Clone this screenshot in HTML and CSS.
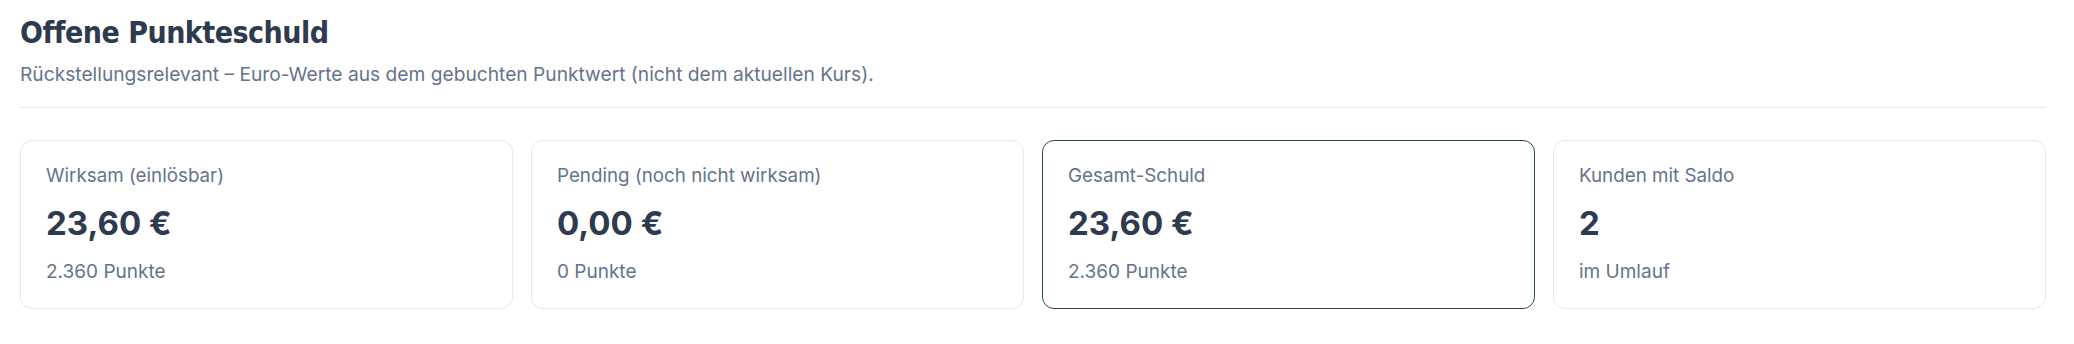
FILE: index.html
```html
<!DOCTYPE html>
<html lang="de">
<head>
<meta charset="utf-8">
<title>Offene Punkteschuld</title>
<link rel="stylesheet" href="styles.css">
</head>
<body>
<section class="page">
  <header class="head">
    <h1 class="title">Offene Punkteschuld</h1>
    <p class="subtitle">Rückstellungsrelevant – Euro-Werte aus dem gebuchten Punktwert (nicht dem aktuellen Kurs).</p>
  </header>
  <hr class="divider">
  <div class="cards">
    <div class="card">
      <div class="card-label">Wirksam (einlösbar)</div>
      <div class="card-value">23,60 €</div>
      <div class="card-sub">2.360 Punkte</div>
    </div>
    <div class="card">
      <div class="card-label">Pending (noch nicht wirksam)</div>
      <div class="card-value">0,00 €</div>
      <div class="card-sub">0 Punkte</div>
    </div>
    <div class="card card-highlight">
      <div class="card-label">Gesamt-Schuld</div>
      <div class="card-value">23,60 €</div>
      <div class="card-sub">2.360 Punkte</div>
    </div>
    <div class="card">
      <div class="card-label">Kunden mit Saldo</div>
      <div class="card-value">2</div>
      <div class="card-sub">im Umlauf</div>
    </div>
  </div>
</section>
</body>
</html>
```

FILE: styles.css
```css
* { box-sizing: border-box; }

html, body {
  margin: 0;
  padding: 0;
  background: #ffffff;
}

body {
  font-family: Inter, "Noto Sans", sans-serif;
  color: #2d3748;
}

.page {
  padding: 15px 28px 0 20px;
}

.title {
  margin: 0;
  font-family: "Liberation Sans Narrow", "DejaVu Sans Condensed", sans-serif;
  font-weight: 700;
  font-size: 30px;
  line-height: 36px;
  letter-spacing: -0.5px;
  color: #2e3a4d;
}

.subtitle {
  margin: 10px 0 0;
  font-size: 19.2px;
  line-height: 27px;
  color: #64748b;
}

.divider {
  margin: 19px 0 0;
  border: 0;
  border-top: 1px solid #e5e7eb;
  height: 0;
}

.cards {
  margin-top: 32px;
  display: grid;
  grid-template-columns: repeat(4, 1fr);
  gap: 18px;
}

.card {
  border: 1px solid #e5e7eb;
  border-radius: 12px;
  padding: 22px 25px 24px;
  background: #ffffff;
}

.card-highlight {
  border-color: #2b4a4a;
}

.card-label {
  font-size: 18.8px;
  line-height: 25px;
  color: #64748b;
}

.card-value {
  margin-top: 17px;
  font-size: 33px;
  line-height: 36px;
  font-weight: 700;
  color: #2e3a4d;
}

.card-sub {
  margin-top: 18px;
  font-size: 19px;
  line-height: 25px;
  color: #64748b;
}
```
